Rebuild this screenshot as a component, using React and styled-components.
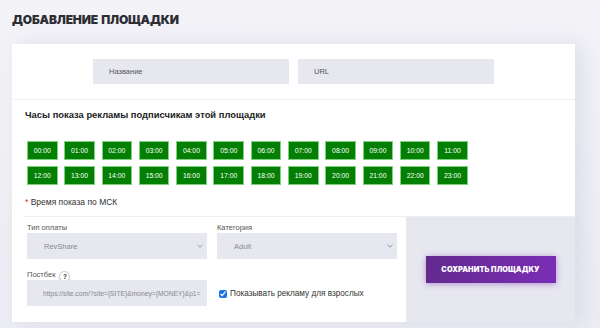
import React from "react";
import styled, { createGlobalStyle } from "styled-components";

const GlobalStyle = createGlobalStyle`
	body {
		margin: 0;
		background: #efeff5;
		font-family: "Liberation Sans", Arial, sans-serif;
	}
`;

const HOURS = Array.from({ length: 24 }, (_, i) => `${String(i).padStart(2, "0")}:00`);

const App = () => {
	return (
		<Page>
			<GlobalStyle />
			<Title>Добавление площадки</Title>
			<Card>
				<TopRow>
					<TextInput placeholder="Название" />
					<TextInput placeholder="URL" />
				</TopRow>
				<Hours>
					<h2>Часы показа рекламы подписчикам этой площадки</h2>
					<HourGrid>
						{HOURS.map((h) => (
							<HourButton key={h}>{h}</HourButton>
						))}
					</HourGrid>
					<Note>
						<span>*</span> Время показа по МСК
					</Note>
				</Hours>
				<Divider />
				<Bottom>
					<Fields>
						<Field>
							<Label>Тип оплаты</Label>
							<Select>
								<span>RevShare</span>
								<Chevron />
							</Select>
						</Field>
						<Field>
							<Label>Категория</Label>
							<Select>
								<span>Adult</span>
								<Chevron />
							</Select>
						</Field>
						<Field>
							<Label>
								Постбек <Help>?</Help>
							</Label>
							<Select $small>
								<span>https://site.com/?site={"{SITE}"}&money={"{MONEY}"}&p1=</span>
							</Select>
						</Field>
						<Check>
							<input type="checkbox" defaultChecked />
							Показывать рекламу для взрослых
						</Check>
					</Fields>
					<Actions>
						<SaveButton>Сохранить площадку</SaveButton>
					</Actions>
				</Bottom>
			</Card>
		</Page>
	);
};

const Chevron = () => (
	<svg width="6" height="4" viewBox="0 0 6 4">
		<path d="M0.5 0.8 L3 3.2 L5.5 0.8" fill="none" stroke="#8a8a95" strokeWidth="0.9" />
	</svg>
);

const Page = styled.div`
	width: 600px;
	height: 328px;
	padding: 0 25px 0 12px;
	box-sizing: border-box;
	background: linear-gradient(180deg, #f3f3f8 0%, #ececf3 100%);
	overflow: hidden;
`;

const Title = styled.h1`
	margin: 0;
	padding-top: 13px;
	height: 44px;
	box-sizing: border-box;
	font-family: Inter, "Open Sans", sans-serif;
	font-weight: 900;
	font-size: 12px;
	line-height: 14px;
	color: #2d2d33;
	text-transform: uppercase;
	letter-spacing: -0.15px;
	word-spacing: 1px;
`;

const Card = styled.div`
	width: 563px;
	height: 278px;
	background: #ffffff;
	box-shadow: 8px 0 20px rgba(110, 110, 170, 0.14);
	display: flex;
	flex-direction: column;
`;

const TopRow = styled.div`
	display: flex;
	justify-content: center;
	gap: 9px;
	padding: 15px 0;
	border-bottom: 1px solid #eef0f6;
`;

const TextInput = styled.input`
	width: 196px;
	height: 25px;
	box-sizing: border-box;
	border: none;
	outline: none;
	background: #e6e7ef;
	padding: 0 16px;
	font-family: "Liberation Sans", Arial, sans-serif;
	font-size: 7.5px;
	&::placeholder {
		color: #555;
	}
`;

const Hours = styled.div`
	padding: 9px 0 0 13px;

	h2 {
		margin: 0;
		font-size: 9.4px;
		line-height: 12px;
		font-weight: 700;
		color: #222;
	}
`;

const HourGrid = styled.div`
	display: grid;
	grid-template-columns: repeat(12, 30.5px);
	column-gap: 6.8px;
	row-gap: 6px;
	margin: 20px 0 0 2px;
`;

const HourButton = styled.div`
	height: 19px;
	box-sizing: border-box;
	background: #038003;
	border: 1px solid #7fd07f;
	color: #fff;
	font-size: 6.8px;
	display: flex;
	align-items: center;
	justify-content: center;
`;

const Note = styled.div`
	margin-top: 11px;
	font-size: 8.5px;
	line-height: 12px;
	color: #333;
	height: 20px;

	span {
		color: #e0302a;
	}
`;

const Divider = styled.div`
	height: 1px;
	margin-left: 12px;
	background: #eceef4;
`;

const Bottom = styled.div`
	flex: 1;
	display: grid;
	grid-template-columns: 394px 1fr;
`;

const Fields = styled.div`
	display: grid;
	grid-template-columns: 180px 180px;
	column-gap: 10px;
	row-gap: 10px;
	align-content: start;
	padding: 5px 0 0 15px;
`;

const Field = styled.div`
	display: flex;
	flex-direction: column;
`;

const Label = styled.div`
	font-size: 7.5px;
	color: #555;
	height: 10px;
	display: flex;
	align-items: center;
	gap: 4px;
	margin-bottom: 1px;
`;

const Help = styled.span`
	width: 11px;
	height: 11px;
	border-radius: 50%;
	background: #fff;
	border: 1px solid #ccc;
	box-shadow: 0 1px 2px rgba(0, 0, 0, 0.15);
	box-sizing: border-box;
	display: inline-flex;
	align-items: center;
	justify-content: center;
	font-size: 6.5px;
	font-weight: 700;
	color: #333;
	margin-top: 4px;
`;

const Select = styled.div`
	height: 26px;
	background: #e6e7ef;
	display: flex;
	align-items: center;
	justify-content: space-between;
	padding: 0 4px 0 ${(p) => (p.$small ? "16px" : "17px")};
	font-size: ${(p) => (p.$small ? "6.7px" : "7.5px")};
	color: #8a8a92;
	white-space: nowrap;
	overflow: hidden;
`;

const Check = styled.label`
	align-self: end;
	margin-bottom: 8px;
	display: flex;
	align-items: center;
	gap: 3px;
	font-size: 8.2px;
	color: #333;

	input {
		width: 8px;
		height: 8px;
		margin: 0 0 0 2px;
		accent-color: #1a73e8;
	}
`;

const Actions = styled.div`
	background: #e7e7f0;
	display: flex;
	align-items: center;
	justify-content: center;
`;

const SaveButton = styled.button`
	width: 130px;
	height: 27px;
	border: none;
	background: linear-gradient(90deg, #632a8f 0%, #7a2db5 100%);
	box-shadow: 0 1px 6px rgba(110, 40, 170, 0.45);
	color: #fff;
	font-family: Inter, "Open Sans", sans-serif;
	font-weight: 900;
	font-size: 7.3px;
	text-transform: uppercase;
	letter-spacing: 0.1px;
`;

export default App;
